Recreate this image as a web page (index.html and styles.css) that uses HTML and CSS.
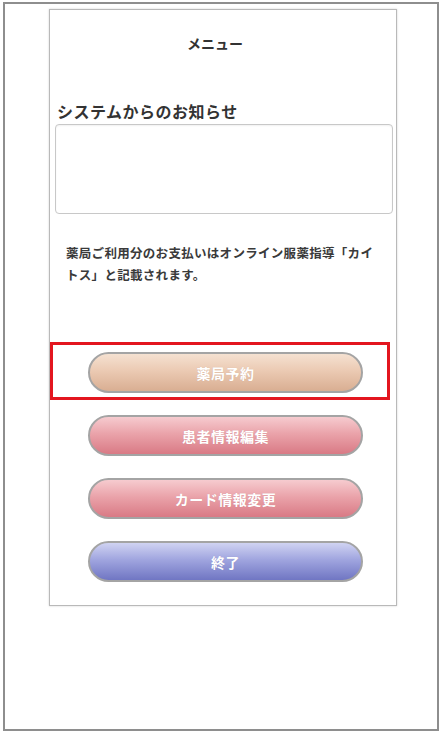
FILE: index.html
```html
<!DOCTYPE html>
<html lang="ja">
<head>
<meta charset="utf-8">
<title>メニュー</title>
<link rel="stylesheet" href="styles.css">
</head>
<body>
<div class="frame">
  <div class="panel">
    <div class="title">メニュー</div>
    <h2 class="heading">システムからのお知らせ</h2>
    <div class="notice"></div>
    <p class="note">薬局ご利用分のお支払いはオンライン服薬指導「カイトス」と記載されます。</p>
    <div class="highlight">
      <button class="btn btn-tan">薬局予約</button>
    </div>
    <button class="btn btn-pink first">患者情報編集</button>
    <button class="btn btn-pink">カード情報変更</button>
    <button class="btn btn-blue">終了</button>
  </div>
</div>
</body>
</html>
```

FILE: styles.css
```css
* { box-sizing: border-box; }
html, body { margin: 0; padding: 0; background: #fff; }
body {
  font-family: "Noto Sans CJK JP", "Noto Sans", sans-serif;
  color: #333;
}
.frame {
  margin: 2px 0 0 3px;
  width: 436px;
  height: 729px;
  border: 2px solid #8e8e8e;
  padding: 5px 0 0 44px;
}
.panel {
  width: 348px;
  border: 1px solid #b9b9b9;
  box-shadow: 0 0 2px rgba(0,0,0,0.18);
  padding: 23px 0 23px 0;
  display: flex;
  flex-direction: column;
}
.title {
  font-size: 14px;
  font-weight: bold;
  line-height: 20px;
  text-align: center;
  padding-right: 16px;
  color: #333;
}
.heading {
  margin: 47px 0 0 0;
  padding-left: 7px;
  font-size: 16px;
  letter-spacing: 0.5px;
  line-height: 22px;
  font-weight: bold;
  color: #333;
}
.notice {
  margin: 2px 3px 0 5px;
  height: 90px;
  border: 1px solid #c8c8c8;
  border-radius: 4px;
  box-shadow: inset 0 1px 2px rgba(0,0,0,0.06);
}
.note {
  margin: 28px 0 0 0;
  padding: 0 14px 0 16px;
  font-size: 12.5px;
  letter-spacing: 0.3px;
  line-height: 22px;
  font-weight: bold;
  color: #3a3a3a;
}
.highlight {
  margin-top: 56px;
  width: 340px;
  border: 3px solid #e3161f;
  padding: 7px 0 4px 35px;
}
.btn {
  display: block;
  width: 275px;
  height: 41px;
  border: 2px solid #a4a4a4;
  border-radius: 21px;
  color: #fff;
  font-family: inherit;
  font-size: 14px;
  font-weight: bold;
  letter-spacing: 0.5px;
  text-shadow: 0 0 1px rgba(0,0,0,0.12);
  padding: 0;
  cursor: pointer;
}
.panel > .btn { margin: 22px 0 0 38px; }
.panel > .btn.first { margin-top: 15px; }
.btn-tan { background: linear-gradient(#f5e1d1 0%, #ebcab3 45%, #d9ae92 100%); }
.btn-pink { background: linear-gradient(#f6cbcf 0%, #eaa3aa 45%, #d97a85 100%); }
.btn-blue { background: linear-gradient(#d0d3f2 0%, #a0a5df 45%, #7076c3 100%); }
```
